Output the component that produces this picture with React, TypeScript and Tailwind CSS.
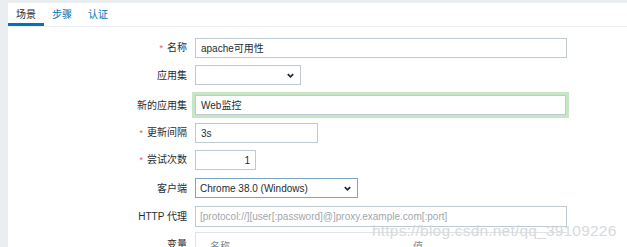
const font = {
  fontFamily: '"Liberation Sans", Arial, "Noto Sans CJK SC", sans-serif',
};

const Chevron = () => (
  <svg width="9" height="9" viewBox="0 0 10 10" className="shrink-0">
    <path d="M2 3.5 L5 6.5 L8 3.5" fill="none" stroke="#1f2c33" strokeWidth="2" />
  </svg>
);

const Row = ({
  label,
  required,
  children,
  className = "",
}: {
  label: string;
  required?: boolean;
  children: React.ReactNode;
  className?: string;
}) => (
  <div className={`flex items-center h-5 ${className}`}>
    <div className="w-[179px] shrink-0 text-right text-[10px] text-[#1f2c33]">
      {required && <span className="text-[#e45959] text-[9px] mr-[4px]">*</span>}
      {label}
    </div>
    <div className="ml-2 flex items-center">{children}</div>
  </div>
);

export default function App() {
  return (
    <div
      className="w-[627px] h-[247px] bg-[#ebeef0] pl-2 pt-[3px] overflow-hidden relative"
      style={font}
    >
      <div className="bg-white h-full">
        <div className="flex h-[24px] border-b border-[#ebeef0] text-[10px]">
          <div className="w-[36px] flex items-center justify-center text-[#1f2c33] border-b-[3px] border-[#0275b8] pt-[3px]">
            场景
          </div>
          <div className="w-[36px] flex items-center justify-center text-[#0275b8]">
            步骤
          </div>
          <div className="w-[36px] flex items-center justify-center text-[#0275b8]">
            认证
          </div>
        </div>
        <div className="flex flex-col gap-[7px] pt-[11px]">
          <Row label="名称" required>
            <div className="w-[372px] h-5 border border-[#bfc9d0] px-[5px] flex items-center text-[10px] text-[#1f2c33]">
              apache可用性
            </div>
          </Row>
          <Row label="应用集">
            <div className="w-[106px] h-5 border border-[#bfc9d0] pl-[5px] pr-[5px] flex items-center justify-end">
              <Chevron />
            </div>
          </Row>
          <Row label="新的应用集" className="mt-[3px]">
            <div className="w-[371px] h-5 border border-[#bfc9d0] px-[5px] flex items-center text-[10px] text-[#1f2c33] shadow-[0_0_0_3px_#c7e6c5]">
              Web监控
            </div>
          </Row>
          <Row label="更新间隔" required className="mt-[1px]">
            <div className="w-[123px] h-5 border border-[#bfc9d0] px-[5px] flex items-center text-[10px] text-[#1f2c33]">
              3s
            </div>
          </Row>
          <Row label="尝试次数" required>
            <div className="w-[61px] h-5 border border-[#bfc9d0] px-[5px] flex items-center justify-end text-[10px] text-[#1f2c33]">
              1
            </div>
          </Row>
          <Row label="客户端" className="mt-[1px]">
            <div className="w-[163px] h-5 border border-[#7aa6c6] pl-[4px] pr-[5px] flex items-center justify-between text-[10px] text-[#1f2c33]">
              <span>Chrome 38.0 (Windows)</span>
              <Chevron />
            </div>
          </Row>
          <Row label="HTTP 代理" className="mt-[1px]">
            <div className="w-[372px] h-[21px] border border-[#bfc9d0] px-[4px] flex items-center text-[10px] text-[#a0a7ab]">
              [protocol://][user[:password]@]proxy.example.com[:port]
            </div>
          </Row>
          <Row label="变量" className="mt-[1px]">
            <div className="w-[372px] h-6 border-l border-t border-[#dfe4e7] flex items-start pt-[6px] text-[10px] text-[#768d99]">
              <span className="pl-[14px] w-[217px]">名称</span>
              <span>值</span>
            </div>
          </Row>
        </div>
      </div>
      <div className="absolute left-[372px] top-[219px] text-[15.5px] tracking-[0.2px] text-[#d3d7d9] opacity-90 pointer-events-none">
        https://blog.csdn.net/qq_39109226
      </div>
    </div>
  );
}
